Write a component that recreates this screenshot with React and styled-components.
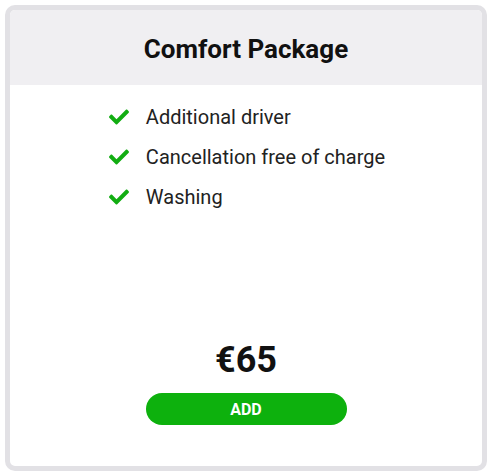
import React from "react";
import styled, { createGlobalStyle } from "styled-components";
import { FaCheck } from "react-icons/fa";

const Global = createGlobalStyle`
  html, body { margin: 0; padding: 0; background: #fff; }
  body { font-family: Roboto, "Liberation Sans", sans-serif; }
`;

const Page = styled.div`
  padding: 5px;
  width: 492px;
  height: 476px;
  box-sizing: border-box;
`;

const Card = styled.div`
  box-sizing: border-box;
  width: 482px;
  height: 466px;
  border: 5px solid #e2e1e5;
  border-radius: 10px;
  display: flex;
  flex-direction: column;
  overflow: hidden;
  background: #fff;
`;

const Header = styled.div`
  height: 75px;
  background: #f0eff2;
  display: flex;
  align-items: center;
  justify-content: center;
`;

const Title = styled.h2`
  margin: 0;
  font-size: 26px;
  font-weight: 700;
  color: #111;
  padding-top: 3px;
`;

const List = styled.ul`
  list-style: none;
  margin: 0;
  padding: 18px 0 0;
  align-self: center;
  display: flex;
  flex-direction: column;
  gap: 12px;
`;

const Item = styled.li`
  display: flex;
  align-items: center;
  gap: 15px;
  height: 28px;
  font-size: 20px;
  color: #222;
`;

const Check = styled(FaCheck)`
  color: #12ad12;
  width: 24px;
  height: 20px;
`;

const Footer = styled.div`
  margin-top: auto;
  padding-bottom: 41px;
  display: flex;
  flex-direction: column;
  align-items: center;
`;

const Price = styled.div`
  font-size: 36px;
  font-weight: 700;
  color: #111;
  line-height: 44px;
  margin-bottom: 11px;
`;

const AddButton = styled.button`
  width: 201px;
  height: 32px;
  border: none;
  border-radius: 16px;
  background: #0db10d;
  color: #fff;
  font-family: Roboto, "Liberation Sans", sans-serif;
  font-weight: 700;
  font-size: 16px;
  cursor: pointer;
`;

const items = ["Additional driver", "Cancellation free of charge", "Washing"];

export default function App() {
  return (
    <>
      <Global />
      <Page>
        <Card>
          <Header>
            <Title>Comfort Package</Title>
          </Header>
          <List>
            {items.map((t) => (
              <Item key={t}>
                <Check />
                <span>{t}</span>
              </Item>
            ))}
          </List>
          <Footer>
            <Price>€65</Price>
            <AddButton>ADD</AddButton>
          </Footer>
        </Card>
      </Page>
    </>
  );
}
